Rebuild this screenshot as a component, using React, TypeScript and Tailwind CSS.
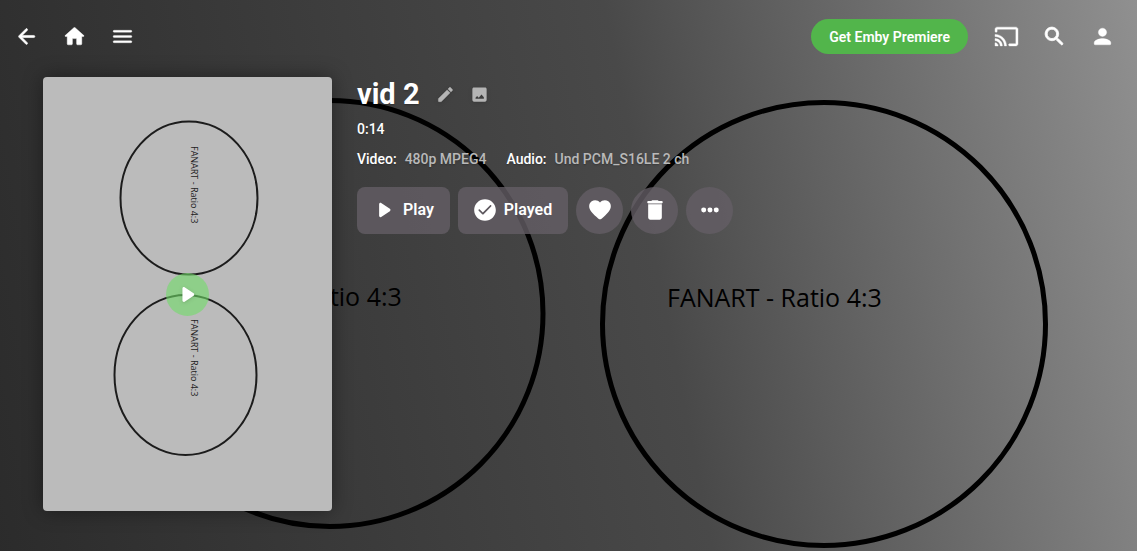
import { ReactNode } from "react";

// 24x24 rounded icon shapes
const icons = {
  back: "M19 11H7.83l4.88-4.88c.39-.39.39-1.03 0-1.42-.39-.39-1.02-.39-1.41 0l-6.59 6.59c-.39.39-.39 1.02 0 1.41l6.59 6.59c.39.39 1.02.39 1.41 0 .39-.39.39-1.02 0-1.41L7.83 13H19c.55 0 1-.45 1-1s-.45-1-1-1z",
  home: "M10 19v-5h4v5c0 .55.45 1 1 1h3c.55 0 1-.45 1-1v-7h1.7c.46 0 .68-.57.33-.87L12.67 3.6c-.38-.34-.96-.34-1.34 0l-8.36 7.53c-.34.3-.13.87.33.87H5v7c0 .55.45 1 1 1h3c.55 0 1-.45 1-1z",
  menu: "M4 18h16c.55 0 1-.45 1-1s-.45-1-1-1H4c-.55 0-1 .45-1 1s.45 1 1 1zm0-5h16c.55 0 1-.45 1-1s-.45-1-1-1H4c-.55 0-1 .45-1 1s.45 1 1 1zM3 7c0 .55.45 1 1 1h16c.55 0 1-.45 1-1s-.45-1-1-1H4c-.55 0-1 .45-1 1z",
  cast: "M21 3H3c-1.1 0-2 .9-2 2v2c0 .55.45 1 1 1s1-.45 1-1V5h18v14h-6c-.55 0-1 .45-1 1s.45 1 1 1h6c1.1 0 2-.9 2-2V5c0-1.1-.9-2-2-2zM1 18v3h3c0-1.66-1.34-3-3-3zm0-4v2c2.76 0 5 2.24 5 5h2c0-3.87-3.13-7-7-7zm0-4v2c4.97 0 9 4.03 9 9h2c0-6.08-4.93-11-11-11z",
  search: "M15.5 14h-.79l-.28-.27c1.2-1.4 1.82-3.31 1.48-5.34-.47-2.78-2.79-5-5.59-5.34-4.23-.52-7.79 3.04-7.27 7.27.34 2.8 2.56 5.12 5.34 5.59 2.03.34 3.94-.28 5.34-1.48l.27.28v.79l4.25 4.25c.41.41 1.08.41 1.49 0 .41-.41.41-1.08 0-1.49L15.5 14zm-6 0C7.01 14 5 11.99 5 9.5S7.01 5 9.5 5 14 7.01 14 9.5 11.99 14 9.5 14z",
  person: "M12 12c2.21 0 4-1.79 4-4s-1.79-4-4-4-4 1.79-4 4 1.79 4 4 4zm0 2c-2.67 0-8 1.34-8 4v1c0 .55.45 1 1 1h14c.55 0 1-.45 1-1v-1c0-2.66-5.33-4-8-4z",
  edit: "M3 17.46v3.04c0 .28.22.5.5.5h3.04c.13 0 .26-.05.35-.15L17.81 9.94l-3.75-3.75L3.15 17.1c-.1.1-.15.22-.15.36zM20.71 7.04c.39-.39.39-1.02 0-1.41l-2.34-2.34c-.39-.39-1.02-.39-1.41 0l-1.83 1.83 3.75 3.75 1.83-1.83z",
  image: "M21 19V5c0-1.1-.9-2-2-2H5c-1.1 0-2 .9-2 2v14c0 1.1.9 2 2 2h14c1.1 0 2-.9 2-2zM7 17.500v-1.500l2-2 2 2 3.500-4 3 3.500v2z",
  play: "M7.500 6.700v10.600c0 1 1.100 1.600 1.900 1.100l8-5.300c.8-.5.8-1.700 0-2.200l-8-5.300c-.8-.5-1.900.1-1.900 1.100z",
  check: "M12 2C6.48 2 2 6.48 2 12s4.480 10 10 10 10-4.480 10-10S17.520 2 12 2zM9.700 16.100L6.200 12.600c-.7-.7.300-1.700 1-1l2.800 2.800 6.700-6.700c.7-.7 1.700.3 1 1l-7.200 7.400c-.2.200-.6.200-.8 0z",
  heart: "M13.35 20.13c-.76.69-1.93.69-2.69-.01l-.11-.1C5.3 15.27 1.87 12.16 2 8.28c.06-1.7.93-3.33 2.34-4.29 2.64-1.8 5.9-.96 7.66 1.1 1.76-2.06 5.02-2.91 7.66-1.1 1.41.96 2.28 2.59 2.34 4.29.14 3.88-3.3 6.99-8.55 11.76l-.1.09z",
  trash: "M5.700 19c0 1.100.9 2 2 2h8.600c1.100 0 2-.9 2-2V6.700H5.700zM18.200 3.800h-2.700l-.71-.6c-.18-.18-.44-.29-.7-.29H9.910c-.26 0-.52.11-.7.29l-.71.6H5.800c-1.300 0-1.300 2.100 0 2.100h12.400c1.300 0 1.300-2.100 0-2.100z",
  more: "M6.200 9.700a2.300 2.300 0 1 0 0 4.600 2.300 2.300 0 0 0 0-4.600zm11.600 0a2.300 2.300 0 1 0 0 4.600 2.300 2.300 0 0 0 0-4.600zm-5.800 0a2.300 2.300 0 1 0 0 4.600 2.300 2.300 0 0 0 0-4.600z",
};

type IconName = keyof typeof icons;

interface IconProps {
  name: IconName;
  className?: string;
  weight?: number;
}

function Icon({ name, className = "size-[25px]", weight = 0 }: IconProps) {
  return (
    <svg
      viewBox="0 0 24 24"
      fill="currentColor"
      stroke="currentColor"
      strokeWidth={weight}
      strokeLinejoin="round"
      aria-hidden="true"
      className={`shrink-0 ${className}`}
    >
      <path d={icons[name]} />
    </svg>
  );
}

function HeaderButton({ name, label, weight }: { name: IconName; label: string; weight?: number }) {
  return (
    <button aria-label={label} className="flex h-[47px] w-12 items-center justify-center">
      <Icon name={name} weight={weight} />
    </button>
  );
}

function ActionButton({ name, children }: { name: IconName; children: ReactNode }) {
  return (
    <button className="flex h-[47px] items-center gap-1.5 rounded-lg bg-[#645e65]/80 pr-4 pb-px pl-3.5 text-base font-semibold">
      <Icon name={name} className="size-[26px]" />
      {children}
    </button>
  );
}

function RoundButton({ name, label }: { name: IconName; label: string }) {
  return (
    <button
      aria-label={label}
      className="flex size-[47px] items-center justify-center rounded-full bg-[#645e65]/80 pb-px"
    >
      <Icon name={name} className="size-[26px]" />
    </button>
  );
}

function Backdrop() {
  return (
    <svg
      viewBox="0 0 1137 551"
      preserveAspectRatio="xMidYMid slice"
      className="absolute inset-0 -z-10 h-full w-full"
    >
      <defs>
        <linearGradient id="shade" gradientUnits="userSpaceOnUse" x1="-80" y1="431" x2="1174" y2="182">
          <stop offset="0" stopColor="#292929" />
          <stop offset="0.59" stopColor="#494949" />
          <stop offset="1" stopColor="#909090" />
        </linearGradient>
      </defs>
      <rect width="1137" height="551" fill="url(#shade)" />
      <g fill="none" stroke="#000" strokeWidth="5">
        <circle cx="330" cy="313.500" r="213" />
        <circle cx="824" cy="324" r="221.500" />
      </g>
      <g fill="#000" fontSize="25" className="font-['Open_Sans',sans-serif]">
        <text x="187" y="306">FANART - Ratio 4:3</text>
        <text x="667" y="307">FANART - Ratio 4:3</text>
      </g>
    </svg>
  );
}

function Poster() {
  return (
    <div className="relative w-[289px] shrink-0 overflow-hidden rounded bg-[#bbb] shadow-[0_0_20px_rgba(0,0,0,0.4)]">
      <svg viewBox="0 0 289 434" className="block w-full">
        <g fill="none" stroke="#1c1c1c" strokeWidth="2">
          <ellipse cx="146" cy="121" rx="68.500" ry="76.500" />
          <ellipse cx="142.500" cy="298" rx="71" ry="80" />
        </g>
        <g fill="#222" fontSize="9" className="font-['Open_Sans',sans-serif]">
          <text transform="translate(148 69) rotate(90)">FANART - Ratio 4:3</text>
          <text transform="translate(148 242) rotate(90)">FANART - Ratio 4:3</text>
        </g>
      </svg>
      <div className="absolute inset-0 flex items-center justify-center">
        <button
          aria-label="Play"
          className="flex size-[43px] items-center justify-center rounded-full bg-[#6fdc68]/60"
        >
          <Icon name="play" className="size-[27px] drop-shadow" />
        </button>
      </div>
    </div>
  );
}

export default function App() {
  return (
    <div className="relative isolate flex min-h-screen flex-col overflow-hidden bg-[#2b2b2b] font-[Roboto,sans-serif] text-white">
      <Backdrop />

      <header className="flex h-[73px] items-center justify-between pr-[11px] pl-0.5">
        <nav className="flex">
          <HeaderButton name="back" label="Back" weight={0.6} />
          <HeaderButton name="home" label="Home" weight={0.4} />
          <HeaderButton name="menu" label="Menu" weight={0.3} />
        </nav>
        <div className="flex items-center">
          <button className="mr-3.5 h-[35px] rounded-full bg-[#52b54b] px-[18px] text-sm font-semibold">
            Get Emby Premiere
          </button>
          <HeaderButton name="cast" label="Cast" weight={0.4} />
          <HeaderButton name="search" label="Search" weight={0.8} />
          <HeaderButton name="person" label="User" weight={0.3} />
        </div>
      </header>

      <main className="flex items-start gap-[25px] px-[43px] pt-1 pb-10">
        <Poster />
        <div className="flex min-w-0 flex-1 flex-col items-start text-shadow-sm">
          <div className="flex items-center">
            <h1 className="text-[29px] leading-[34px] font-bold">vid 2</h1>
            <div className="ml-4 flex gap-[15px] text-[#b4b4b4]">
              <button aria-label="Edit">
                <Icon name="edit" className="size-[19px] drop-shadow" weight={0.5} />
              </button>
              <button aria-label="Edit images">
                <Icon name="image" className="size-[19px] drop-shadow" />
              </button>
            </div>
          </div>
          <div className="mt-2 text-sm font-medium">0:14</div>
          <div className="mt-2.5 flex gap-5 text-sm font-medium">
            <div className="flex gap-2">
              Video: <span className="text-[#b9b9b9]">480p MPEG4</span>
            </div>
            <div className="flex gap-2">
              Audio: <span className="text-[#b9b9b9]">Und PCM_S16LE 2 ch</span>
            </div>
          </div>
          <div className="mt-[18px] flex flex-wrap gap-2 text-shadow-none">
            <ActionButton name="play">Play</ActionButton>
            <ActionButton name="check">Played</ActionButton>
            <RoundButton name="heart" label="Favorite" />
            <RoundButton name="trash" label="Delete" />
            <RoundButton name="more" label="More" />
          </div>
        </div>
      </main>
    </div>
  );
}
